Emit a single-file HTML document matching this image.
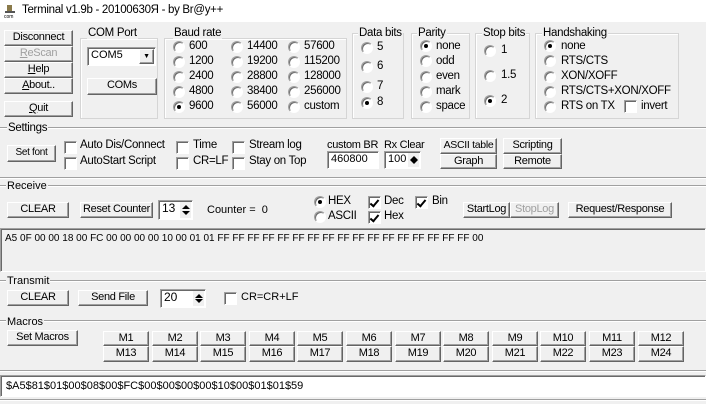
<!DOCTYPE html>
<html><head><meta charset="utf-8"><style>
*{box-sizing:border-box;margin:0;padding:0}
body{width:706px;height:404px;background:#f0f0f0;font-family:"Liberation Sans",sans-serif;font-size:11px;color:#000;position:relative;overflow:hidden}
.a{position:absolute;white-space:nowrap}
.a[style*="font-size:12px"],.gl[style*="font-size:12px"]{font-size:11.5px!important;letter-spacing:-0.3px}
.b{position:absolute;background:#f0f0f0;border:1px solid;border-color:#fff #646464 #646464 #fff;box-shadow:inset -1px -1px #a0a0a0;text-align:center;line-height:13px;white-space:nowrap;letter-spacing:-0.3px;overflow:hidden}
.g{position:absolute;border:1px solid #d5d5d5;box-shadow:inset 1px 1px #fff}
.gl{position:absolute;background:#f0f0f0;padding:0 1px;line-height:12px;white-space:nowrap}
.r{position:absolute;width:12px;height:12px;border-radius:50%;border:1px solid;border-color:#a0a0a0 #fff #fff #a0a0a0;background:#fff;box-shadow:inset 1px 1px #696969}
.r.on::after{content:"";position:absolute;left:3px;top:3px;width:4px;height:4px;border-radius:50%;background:#000}
.c{position:absolute;width:13px;height:13px;border:1px solid;border-color:#a0a0a0 #fff #fff #a0a0a0;background:#fff;box-shadow:inset 1px 1px #696969}
.c.on::after{content:"";position:absolute;left:3px;top:1px;width:3px;height:7px;border:solid #000;border-width:0 2px 2px 0;transform:rotate(40deg)}
.e{position:absolute;background:#fff;border:1px solid;border-color:#a0a0a0 #fff #fff #a0a0a0;box-shadow:inset 1px 1px #696969;padding-left:3px;line-height:15px;white-space:nowrap}
.hl{position:absolute;left:0;width:706px;height:2px;border-top:1px solid #a0a0a0;border-bottom:1px solid #fff}
.sp{position:absolute;width:12px;border-left:1px solid #fff;background:#f0f0f0}
.sp::before{content:"";position:absolute;left:2px;top:3px;border:4px solid transparent;border-bottom:4px solid #000;border-top:0}
.sp::after{content:"";position:absolute;left:2px;bottom:3px;border:4px solid transparent;border-top:4px solid #000;border-bottom:0}
</style></head><body>
<div class="a" style="left:0;top:0;width:706px;height:22px;background:#fff"></div>
<div class="a" style="left:4px;top:4px;width:12px;height:13px"><svg width="12" height="14"><rect x="3" y="1" width="5" height="6" fill="#8a7a4a"/><rect x="1" y="7" width="10" height="2" fill="#555"/><text x="0" y="14" font-size="5" font-family="Liberation Sans">com</text></svg></div>
<div class="a" style="left:22px;top:4px;font-size:12px">Terminal v1.9b - 20100630Я - by Br@y++</div>

<div class="b" style="left:4px;top:30px;width:69px;height:16px">Disconnect</div>
<div class="b" style="left:4px;top:46px;width:69px;height:16px;color:#a0a0a0"><u>R</u>eScan</div>
<div class="b" style="left:4px;top:62px;width:69px;height:16px"><u>H</u>elp</div>
<div class="b" style="left:4px;top:78px;width:69px;height:16px"><u>A</u>bout..</div>
<div class="b" style="left:4px;top:101px;width:69px;height:16px"><u>Q</u>uit</div>

<div class="g" style="left:80px;top:38px;width:78px;height:81px"></div><div class="gl" style="left:87px;top:27px;font-size:12px">COM Port</div>
<div class="e" style="left:87px;top:47px;width:69px;height:19px">COM5</div>
<div class="b" style="left:139px;top:49px;width:15px;height:15px;font-size:7px;line-height:13px">▼</div>
<div class="b" style="left:87px;top:78px;width:70px;height:17px">COMs</div>

<div class="g" style="left:164px;top:38px;width:183px;height:81px"></div><div class="gl" style="left:173px;top:27px;font-size:12px">Baud rate</div>
<div class="r" style="left:173px;top:41px"></div><div class="a" style="left:189px;top:40px;font-size:12px">600</div>
<div class="r" style="left:173px;top:56px"></div><div class="a" style="left:189px;top:55px;font-size:12px">1200</div>
<div class="r" style="left:173px;top:71px"></div><div class="a" style="left:189px;top:70px;font-size:12px">2400</div>
<div class="r" style="left:173px;top:86px"></div><div class="a" style="left:189px;top:85px;font-size:12px">4800</div>
<div class="r on" style="left:173px;top:101px"></div><div class="a" style="left:189px;top:100px;font-size:12px">9600</div>
<div class="r" style="left:231px;top:41px"></div><div class="a" style="left:247px;top:40px;font-size:12px">14400</div>
<div class="r" style="left:231px;top:56px"></div><div class="a" style="left:247px;top:55px;font-size:12px">19200</div>
<div class="r" style="left:231px;top:71px"></div><div class="a" style="left:247px;top:70px;font-size:12px">28800</div>
<div class="r" style="left:231px;top:86px"></div><div class="a" style="left:247px;top:85px;font-size:12px">38400</div>
<div class="r" style="left:231px;top:101px"></div><div class="a" style="left:247px;top:100px;font-size:12px">56000</div>
<div class="r" style="left:288px;top:41px"></div><div class="a" style="left:304px;top:40px;font-size:12px">57600</div>
<div class="r" style="left:288px;top:56px"></div><div class="a" style="left:304px;top:55px;font-size:12px">115200</div>
<div class="r" style="left:288px;top:71px"></div><div class="a" style="left:304px;top:70px;font-size:12px">128000</div>
<div class="r" style="left:288px;top:86px"></div><div class="a" style="left:304px;top:85px;font-size:12px">256000</div>
<div class="r" style="left:288px;top:101px"></div><div class="a" style="left:304px;top:100px;font-size:12px">custom</div>

<div class="g" style="left:352px;top:33px;width:52px;height:86px"></div><div class="gl" style="left:358px;top:27px;font-size:12px">Data bits</div>
<div class="r" style="left:361px;top:42px"></div><div class="a" style="left:377px;top:41px;font-size:12px">5</div>
<div class="r" style="left:361px;top:61px"></div><div class="a" style="left:377px;top:60px;font-size:12px">6</div>
<div class="r" style="left:361px;top:81px"></div><div class="a" style="left:377px;top:80px;font-size:12px">7</div>
<div class="r on" style="left:361px;top:97px"></div><div class="a" style="left:377px;top:96px;font-size:12px">8</div>

<div class="g" style="left:411px;top:33px;width:59px;height:86px"></div><div class="gl" style="left:417px;top:27px;font-size:12px">Parity</div>
<div class="r on" style="left:420px;top:40px"></div><div class="a" style="left:436px;top:40px;font-size:12px">none</div>
<div class="r" style="left:420px;top:55px"></div><div class="a" style="left:436px;top:55px;font-size:12px">odd</div>
<div class="r" style="left:420px;top:71px"></div><div class="a" style="left:436px;top:70px;font-size:12px">even</div>
<div class="r" style="left:420px;top:86px"></div><div class="a" style="left:436px;top:85px;font-size:12px">mark</div>
<div class="r" style="left:420px;top:101px"></div><div class="a" style="left:436px;top:100px;font-size:12px">space</div>

<div class="g" style="left:475px;top:33px;width:55px;height:86px"></div><div class="gl" style="left:482px;top:27px;font-size:12px">Stop bits</div>
<div class="r" style="left:484px;top:45px"></div><div class="a" style="left:501px;top:44px;font-size:12px">1</div>
<div class="r" style="left:484px;top:70px"></div><div class="a" style="left:501px;top:69px;font-size:12px">1.5</div>
<div class="r on" style="left:484px;top:95px"></div><div class="a" style="left:501px;top:94px;font-size:12px">2</div>

<div class="g" style="left:535px;top:33px;width:144px;height:86px"></div><div class="gl" style="left:542px;top:27px;font-size:12px">Handshaking</div>
<div class="r on" style="left:544px;top:40px"></div><div class="a" style="left:561px;top:40px;font-size:12px">none</div>
<div class="r" style="left:544px;top:55px"></div><div class="a" style="left:561px;top:55px;font-size:12px">RTS/CTS</div>
<div class="r" style="left:544px;top:71px"></div><div class="a" style="left:561px;top:70px;font-size:12px">XON/XOFF</div>
<div class="r" style="left:544px;top:86px"></div><div class="a" style="left:561px;top:85px;font-size:12px">RTS/CTS+XON/XOFF</div>
<div class="r" style="left:544px;top:101px"></div><div class="a" style="left:561px;top:100px;font-size:12px">RTS on TX</div>
<div class="c" style="left:624px;top:100px"></div><div class="a" style="left:641px;top:100px;font-size:12px">invert</div>

<div class="hl" style="top:127px"></div><div class="gl" style="left:7px;top:122px;font-size:12px">Settings</div>
<div class="b" style="left:7px;top:145px;width:49px;height:17px;font-size:10px">Set font</div>
<div class="c" style="left:64px;top:141px"></div><div class="a" style="left:80px;top:139px;font-size:12px">Auto Dis/Connect</div>
<div class="c" style="left:64px;top:157px"></div><div class="a" style="left:80px;top:155px;font-size:12px">AutoStart Script</div>
<div class="c" style="left:176px;top:141px"></div><div class="a" style="left:193px;top:139px;font-size:12px">Time</div>
<div class="c" style="left:176px;top:157px"></div><div class="a" style="left:193px;top:155px;font-size:12px">CR=LF</div>
<div class="c" style="left:232px;top:141px"></div><div class="a" style="left:249px;top:139px;font-size:12px">Stream log</div>
<div class="c" style="left:232px;top:157px"></div><div class="a" style="left:249px;top:155px;font-size:12px">Stay on Top</div>
<div class="a" style="left:327px;top:139px;letter-spacing:-0.3px">custom BR</div>
<div class="e" style="left:327px;top:151px;width:52px;height:18px">460800</div>
<div class="a" style="left:384px;top:139px;letter-spacing:-0.3px">Rx Clear</div>
<div class="e" style="left:384px;top:151px;width:37px;height:18px">100</div><div class="sp" style="left:407px;top:153px;height:14px"></div>
<div class="b" style="left:440px;top:138px;width:57px;height:16px;font-size:10.5px">ASCII table</div>
<div class="b" style="left:503px;top:138px;width:59px;height:16px">Scripting</div>
<div class="b" style="left:440px;top:154px;width:57px;height:15px">Graph</div>
<div class="b" style="left:503px;top:154px;width:59px;height:15px">Remote</div>

<div class="hl" style="top:177px"></div>
<div class="hl" style="top:185px"></div><div class="gl" style="left:6px;top:180px">Receive</div>
<div class="b" style="left:7px;top:202px;width:62px;height:16px">CLEAR</div>
<div class="b" style="left:80px;top:202px;width:73px;height:16px">Reset Counter</div>
<div class="e" style="left:158px;top:200px;width:35px;height:20px;font-size:12px">13</div><div class="sp" style="left:179px;top:202px;height:16px"></div>
<div class="a" style="left:207px;top:204px">Counter =&nbsp; 0</div>
<div class="r on" style="left:314px;top:196px"></div><div class="a" style="left:328px;top:195px;font-size:12px">HEX</div>
<div class="r" style="left:314px;top:211px"></div><div class="a" style="left:328px;top:210px;font-size:12px">ASCII</div>
<div class="c on" style="left:368px;top:196px"></div><div class="a" style="left:384px;top:195px;font-size:12px">Dec</div>
<div class="c on" style="left:368px;top:211px"></div><div class="a" style="left:384px;top:210px;font-size:12px">Hex</div>
<div class="c on" style="left:415px;top:196px"></div><div class="a" style="left:432px;top:195px;font-size:12px">Bin</div>
<div class="b" style="left:463px;top:202px;width:47px;height:16px">StartLog</div>
<div class="b" style="left:510px;top:202px;width:49px;height:16px;color:#a0a0a0">StopLog</div>
<div class="b" style="left:568px;top:202px;width:104px;height:16px">Request/Response</div>

<div class="a" style="left:0;top:228px;width:706px;height:44px;border:1px solid;border-color:#a0a0a0 #fff #fff #a0a0a0;box-shadow:inset 1px 1px #696969"></div>
<div class="a" style="left:5px;top:233px;font-size:10px">A5 0F 00 00 18 00 FC 00 00 00 00 10 00 01 01 FF FF FF FF FF FF FF FF FF FF FF FF FF FF FF FF FF 00</div>

<div class="hl" style="top:280px"></div><div class="gl" style="left:6px;top:275px">Transmit</div>
<div class="b" style="left:7px;top:290px;width:62px;height:16px">CLEAR</div>
<div class="b" style="left:78px;top:290px;width:70px;height:16px">Send File</div>
<div class="e" style="left:160px;top:289px;width:46px;height:19px;font-size:12px">20</div><div class="sp" style="left:192px;top:291px;height:15px"></div>
<div class="c" style="left:224px;top:292px"></div><div class="a" style="left:241px;top:291px">CR=CR+LF</div>

<div class="hl" style="top:320px"></div><div class="gl" style="left:6px;top:316px">Macros</div>
<div class="b" style="left:7px;top:330px;width:71px;height:16px">Set Macros</div>
<div class="b" style="left:103px;top:331px;width:46px;height:15px">M1</div>
<div class="b" style="left:152px;top:331px;width:46px;height:15px">M2</div>
<div class="b" style="left:200px;top:331px;width:46px;height:15px">M3</div>
<div class="b" style="left:249px;top:331px;width:46px;height:15px">M4</div>
<div class="b" style="left:297px;top:331px;width:46px;height:15px">M5</div>
<div class="b" style="left:346px;top:331px;width:46px;height:15px">M6</div>
<div class="b" style="left:395px;top:331px;width:46px;height:15px">M7</div>
<div class="b" style="left:443px;top:331px;width:46px;height:15px">M8</div>
<div class="b" style="left:492px;top:331px;width:46px;height:15px">M9</div>
<div class="b" style="left:540px;top:331px;width:46px;height:15px">M10</div>
<div class="b" style="left:589px;top:331px;width:46px;height:15px">M11</div>
<div class="b" style="left:638px;top:331px;width:46px;height:15px">M12</div>
<div class="b" style="left:103px;top:346px;width:46px;height:16px">M13</div>
<div class="b" style="left:152px;top:346px;width:46px;height:16px">M14</div>
<div class="b" style="left:200px;top:346px;width:46px;height:16px">M15</div>
<div class="b" style="left:249px;top:346px;width:46px;height:16px">M16</div>
<div class="b" style="left:297px;top:346px;width:46px;height:16px">M17</div>
<div class="b" style="left:346px;top:346px;width:46px;height:16px">M18</div>
<div class="b" style="left:395px;top:346px;width:46px;height:16px">M19</div>
<div class="b" style="left:443px;top:346px;width:46px;height:16px">M20</div>
<div class="b" style="left:492px;top:346px;width:46px;height:16px">M21</div>
<div class="b" style="left:540px;top:346px;width:46px;height:16px">M22</div>
<div class="b" style="left:589px;top:346px;width:46px;height:16px">M23</div>
<div class="b" style="left:638px;top:346px;width:46px;height:16px">M24</div>

<div class="hl" style="top:370px"></div>
<div class="e" style="left:0;top:375px;width:706px;height:22px;padding-left:5px;line-height:20px;font-size:11px">$A5$81$01$00$08$00$FC$00$00$00$00$10$00$01$01$59</div>
<div class="hl" style="top:399px"></div>
</body></html>
